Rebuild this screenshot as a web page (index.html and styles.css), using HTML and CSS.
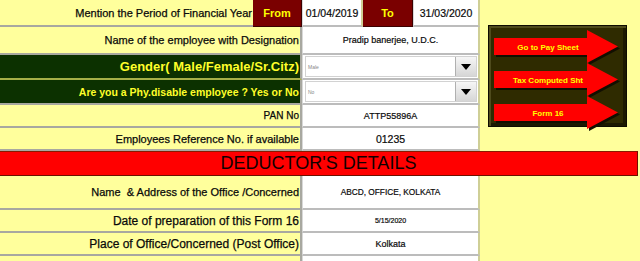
FILE: index.html
```html
<!DOCTYPE html>
<html>
<head>
<meta charset="utf-8">
<link rel="stylesheet" href="styles.css">
</head>
<body>
<div class="sheet">
  <div class="section">
    <div class="form">
      <div class="row row-period h27">
        <div class="cell label">Mention the Period of Financial Year</div>
        <div class="cell tag">From</div>
        <div class="cell value v-date">01/04/2019</div>
        <div class="cell tag">To</div>
        <div class="cell value v-date">31/03/2020</div>
      </div>
      <div class="row h28">
        <div class="cell label">Name of the employee with Designation</div>
        <div class="cell value v9">Pradip banerjee, U.D.C.</div>
      </div>
      <div class="row h25">
        <div class="cell label dark big sep">Gender( Male/Female/Sr.Citz)</div>
        <div class="cell value drop">
          <div class="select"><span class="opt">Male</span><span class="btn"><i class="tri"></i></span></div>
        </div>
      </div>
      <div class="row h25">
        <div class="cell label dark mid">Are you a Phy.disable employee ? Yes or No</div>
        <div class="cell value drop">
          <div class="select"><span class="opt">No</span><span class="btn"><i class="tri"></i></span></div>
        </div>
      </div>
      <div class="row h23">
        <div class="cell label sm">PAN No</div>
        <div class="cell value v9">ATTP55896A</div>
      </div>
      <div class="row h23">
        <div class="cell label">Employees Reference No. if available</div>
        <div class="cell value v-date">01235</div>
      </div>
    </div>
    <aside class="panel">
      <nav class="nav-box">
        <svg class="arrow" width="126" height="33" viewBox="0 0 126 33">
          <polygon class="shadow" points="2,10 95,10 95,2 126,18.5 95,35 95,27 2,27"/>
          <polygon class="shape" points="0,8 93,8 93,0 124,16.5 93,33 93,25 0,25"/>
          <text x="54" y="19.5">Go to Pay Sheet</text>
        </svg>
        <svg class="arrow" width="126" height="33" viewBox="0 0 126 33">
          <polygon class="shadow" points="2,10 95,10 95,2 126,18.5 95,35 95,27 2,27"/>
          <polygon class="shape" points="0,8 93,8 93,0 124,16.5 93,33 93,25 0,25"/>
          <text x="54" y="19.5">Tax Computed Sht</text>
        </svg>
        <svg class="arrow" width="126" height="33" viewBox="0 0 126 33">
          <polygon class="shadow" points="2,10 95,10 95,2 126,18.5 95,35 95,27 2,27"/>
          <polygon class="shape" points="0,8 93,8 93,0 124,16.5 93,33 93,25 0,25"/>
          <text x="54" y="19.5">Form 16</text>
        </svg>
      </nav>
    </aside>
  </div>
  <div class="banner">DEDUCTOR'S DETAILS</div>
  <div class="section">
    <div class="form">
      <div class="row h34">
        <div class="cell label">Name&nbsp; &amp; Address of the Office /Concerned</div>
        <div class="cell value v8">ABCD, OFFICE, KOLKATA</div>
      </div>
      <div class="row h23">
        <div class="cell label lg">Date of preparation of this Form 16</div>
        <div class="cell value v7">5/15/2020</div>
      </div>
      <div class="row h23">
        <div class="cell label lg">Place of Office/Concerned (Post Office)</div>
        <div class="cell value v9">Kolkata</div>
      </div>
      <div class="row h5">
        <div class="cell label lg"></div>
        <div class="cell value v9"></div>
      </div>
    </div>
    <aside class="panel"></aside>
  </div>
</div>
</body>
</html>
```

FILE: styles.css
```css
* { box-sizing: border-box; }

html, body {
  margin: 0;
  padding: 0;
}

body {
  width: 640px;
  height: 261px;
  overflow: hidden;
  background: #ffff9c;
  font-family: "Liberation Sans", Arial, sans-serif;
  color: #0a0a0a;
}

.section {
  display: flex;
}

.form {
  width: 480px;
  flex: none;
}

.row {
  display: grid;
  grid-template-columns: 302px 178px;
}

.row-period {
  grid-template-columns: 253px 49px 61px 50px 67px;
}

.h5 { height: 5px; }
.h23 { height: 23px; }
.h25 { height: 25px; }
.h27 { height: 27px; }
.h28 { height: 28px; }
.h34 { height: 34px; }

.h5 .cell { border-bottom: 0; }

.cell {
  display: flex;
  align-items: center;
  border-bottom: 2px solid #a8a8a0;
  white-space: nowrap;
  overflow: hidden;
}

.label {
  justify-content: flex-end;
  padding-right: 1px;
  background: #ffff9c;
  border-right: 2px solid #a8a8a0;
  font-size: 11px;
  -webkit-text-stroke: 0.25px #0a0a0a;
}

.label.sm { font-size: 10px; }
.label.lg { font-size: 12px; }

.label.dark {
  background: #0c3100;
  color: #ffff2a;
  font-weight: bold;
  -webkit-text-stroke: 0;
}

.label.big { font-size: 13px; }
.label.mid { font-size: 10.5px; }
.label.sep { border-bottom-color: #a6b048; }

.tag {
  justify-content: center;
  background: #7a0000;
  color: #ffff00;
  font-weight: bold;
  font-size: 11px;
  border-right: 1px solid #3c0000;
  border-bottom: 1px solid #3c0000;
}

.row-period .label { border-right: 0; }

.value {
  justify-content: center;
  background: #ffffff;
  border-bottom-color: #bcbcbc;
  border-right: 2px solid #cfcf96;
  border-left: 1px solid #d8d8d8;
  font-size: 9px;
  -webkit-text-stroke: 0.2px #0a0a0a;
}

.v-date { font-size: 10.5px; }
.v9 { font-size: 9px; }
.v8 { font-size: 8.3px; }
.v7 { font-size: 7px; }

.drop {
  padding: 1px 1px 1px 2px;
  align-items: stretch;
  -webkit-text-stroke: 0;
}

.select {
  flex: 1;
  display: flex;
  align-items: center;
  justify-content: space-between;
  border: 1px solid #d2d2d2;
  background: #fff;
}

.opt {
  padding-left: 2px;
  font-size: 5px;
  color: #888;
}

.btn {
  width: 21px;
  height: 100%;
  display: flex;
  align-items: center;
  justify-content: center;
  border-left: 1px solid #b0b0b0;
  background: linear-gradient(#f6f6f6, #d6d6d6);
}

.tri {
  width: 0;
  height: 0;
  border-left: 5px solid transparent;
  border-right: 5px solid transparent;
  border-top: 6px solid #000;
}

.panel {
  flex: 1;
  padding: 25px 0 0 8px;
}

.nav-box {
  width: 139px;
  height: 102px;
  display: flex;
  flex-direction: column;
  padding: 4px 0 0 5px;
  background: #2f2b00;
  border: 1px solid #0e0c00;
  box-shadow: inset 2px 2px 0 #4f4b1c, inset -3px -3px 0 #1c1900;
}

.arrow {
  display: block;
  overflow: visible;
}

.arrow .shape { fill: #ff0000; }
.arrow .shadow { fill: #120f00; }

.arrow text {
  fill: #ffff00;
  font-family: "Liberation Sans", Arial, sans-serif;
  font-size: 8px;
  font-weight: bold;
  text-anchor: middle;
}

.banner {
  width: 638px;
  height: 25px;
  display: flex;
  align-items: center;
  justify-content: center;
  background: #ff0000;
  border-top: 1px solid #8a1a00;
  border-bottom: 1px solid #6e1000;
  border-right: 1px solid #6e1000;
  color: #120000;
  font-size: 18px;
}
```
